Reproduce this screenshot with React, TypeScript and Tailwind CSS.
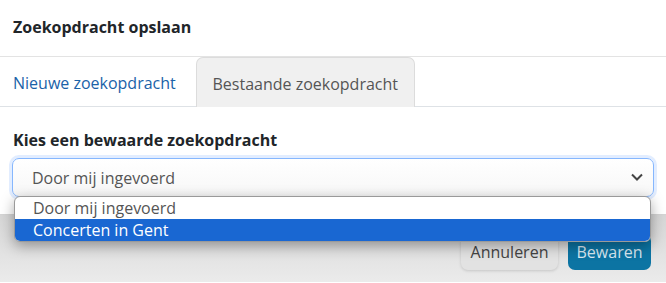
import React from "react";

export default function App() {
  return (
    <div
      className="w-[666px] h-[283px] overflow-hidden bg-white text-[#212529] relative"
      style={{ fontFamily: '"Open Sans", "Noto Sans", sans-serif' }}
    >
      <div className="h-[57px] px-[13px] flex items-center border-b border-[#e3e3e3]">
        <h1 className="text-[16px] font-bold leading-none pb-[3px]">Zoekopdracht opslaan</h1>
      </div>
      <div className="h-[50px] flex items-end border-b border-[#dee2e6] px-[13px]">
        <div className="h-[49px] flex items-center pt-[2px] text-[16px] text-[#1a62a8] mr-[20px]">
          Nieuwe zoekopdracht
        </div>
        <div className="h-[50px] w-[219px] flex items-center justify-center pt-[2px] rounded-t-[7px] border border-b-0 border-[#dcdcdc] bg-[#f0f0f0] text-[16px] text-[#555] -mb-px">
          Bestaande zoekopdracht
        </div>
      </div>
      <div className="px-[12px] pt-[22px] h-[107px] relative">
        <label className="block pl-[1px] text-[16px] font-bold leading-[22px] mb-[7px]">
          Kies een bewaarde zoekopdracht
        </label>
        <div className="relative h-[39px] rounded-[7px] border border-[#86b7fe] shadow-[0_0_0_3px_rgba(13,110,253,0.12)] bg-gradient-to-b from-white to-[#f7f7f7] flex items-center pl-[19px] text-[16px] text-[#555]">
          Door mij ingevoerd
          <svg className="absolute right-[10px] top-[14px]" width="12" height="8" viewBox="0 0 12 8" fill="none">
            <path d="M1 1.5L6 6.5L11 1.5" stroke="#444" strokeWidth="2" />
          </svg>
        </div>
        <div className="absolute left-[14px] top-[89px] w-[637px] z-10 rounded-[6px] border border-[#9a9a9a] bg-white overflow-hidden shadow-[0_4px_14px_rgba(0,0,0,0.35)] text-[16px] leading-[22px]">
          <div className="h-[22px] pl-[18px] text-[#555]">Door mij ingevoerd</div>
          <div className="h-[22px] pl-[18px] bg-[#1967d2] text-white">Concerten in Gent</div>
        </div>
      </div>
      <div className="h-[68px] border-t border-[#d4d4d4] bg-gradient-to-b from-[#d6d6d6] to-[#ebebeb] flex items-start justify-end gap-[10px] pt-[19px] pr-[15px]">
        <button className="h-[36px] w-[97px] rounded-[7px] bg-[#e2e2e2] text-[#444] text-[16px] shadow-[0_1px_3px_rgba(0,0,0,0.15)]">
          Annuleren
        </button>
        <button className="h-[36px] w-[83px] rounded-[7px] bg-[#0c74a3] text-[#d8e8f2] text-[16px]">
          Bewaren
        </button>
      </div>
    </div>
  );
}
